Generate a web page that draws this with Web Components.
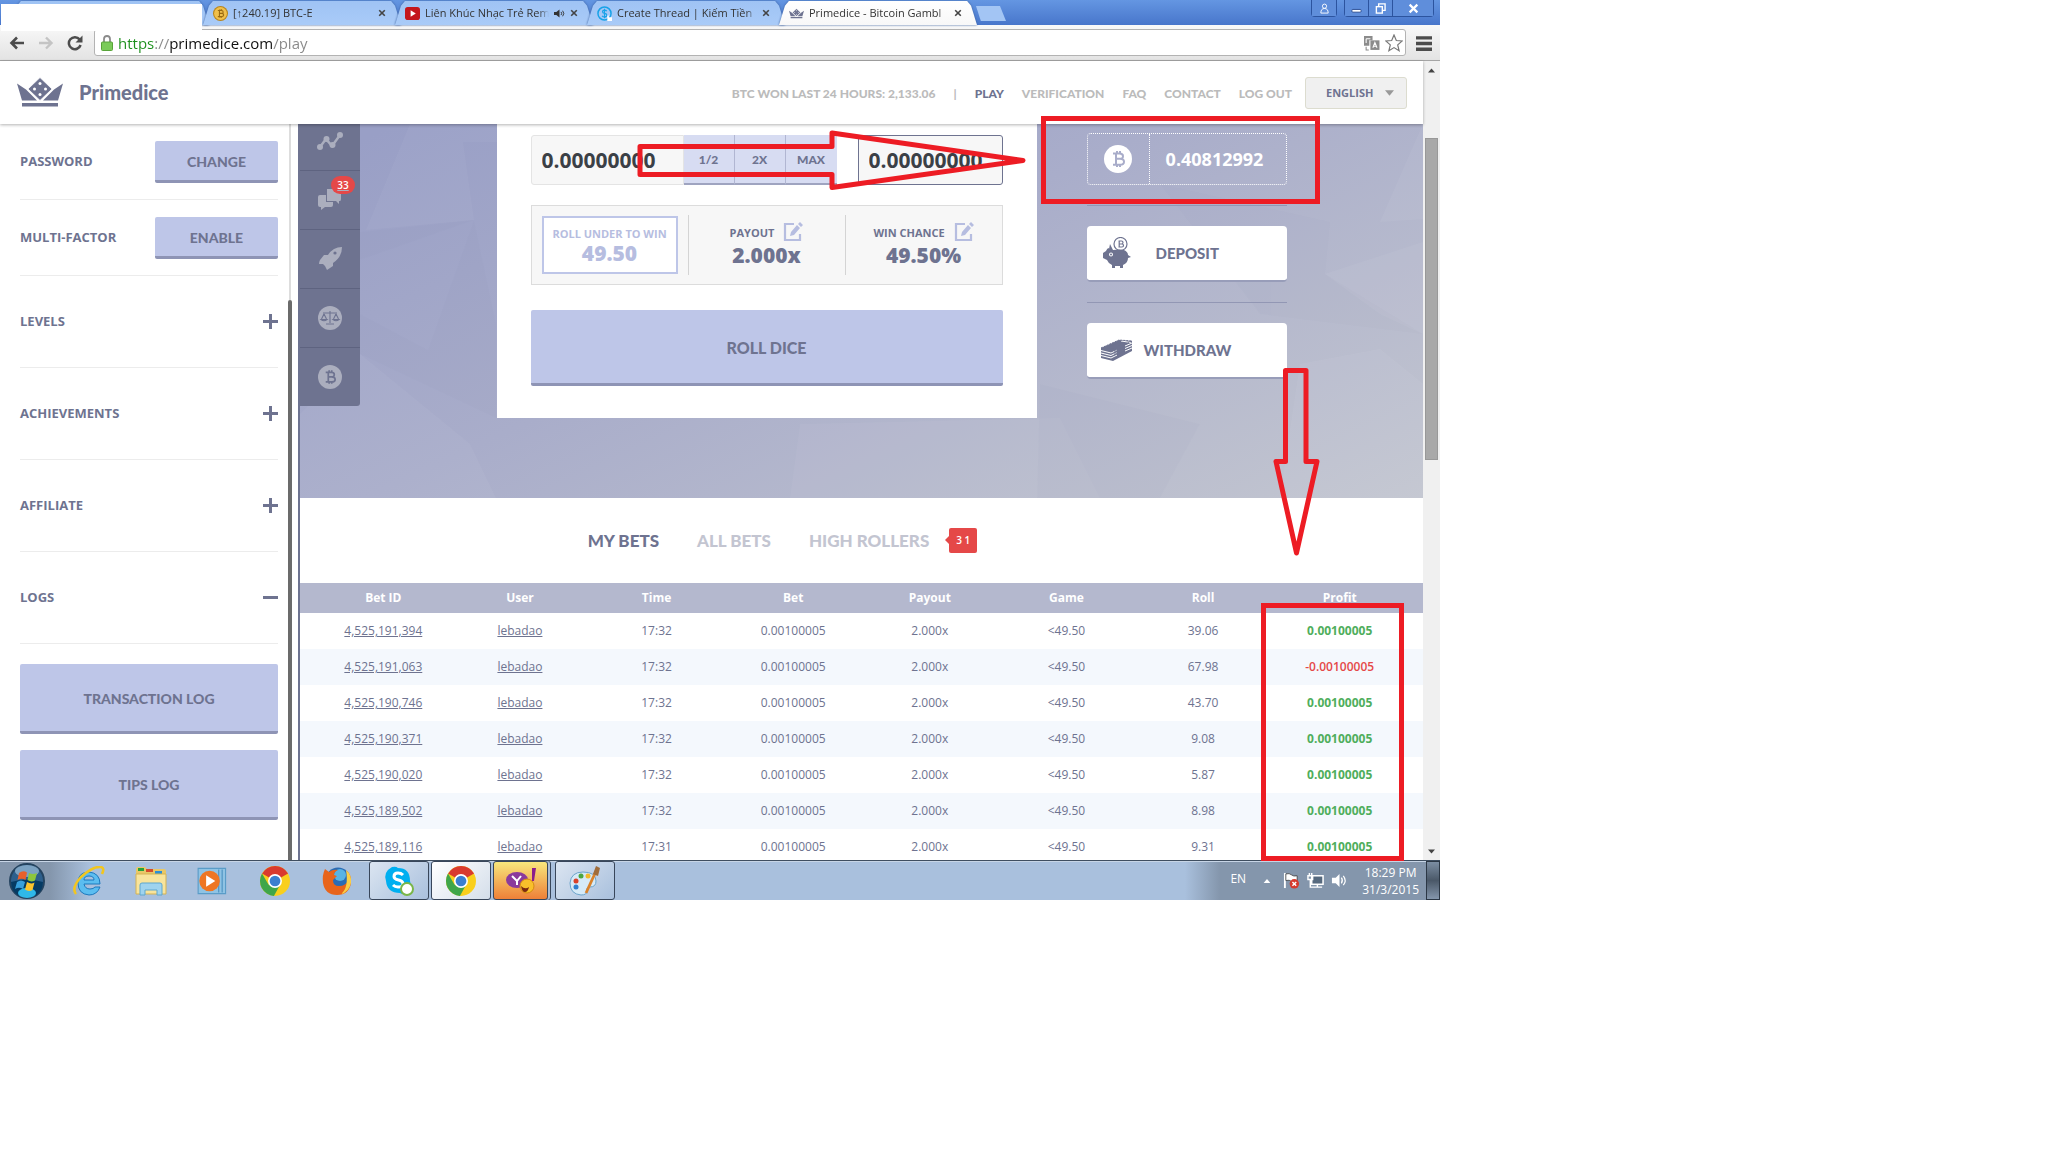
<!DOCTYPE html>
<html lang="en">
<head>
<meta charset="utf-8">
<title>Primedice - Bitcoin Gambling</title>
<style>
    body {
        margin: 0;
        display: grid;
        grid-template-columns: 45fr 19fr;
        background: #fff;
        font-family: "Open Sans", "Noto Sans", sans-serif;
        --ink: #6e7390;
        --soft: #bec6e8;
        --edge: #8e94b5;
        --display: Lato, "Open Sans", sans-serif;
    }
</style>
</head>
<body>

<win-desktop>
    <chrome-tabs>
        <chrome-tab></chrome-tab>
        <chrome-tab icon="coin">[↑240.19] BTC-E</chrome-tab>
        <chrome-tab icon="youtube" sound>Liên Khúc Nhạc Trẻ Rem</chrome-tab>
        <chrome-tab icon="thread">Create Thread | Kiếm Tiền</chrome-tab>
        <chrome-tab icon="crown" active>Primedice - Bitcoin Gambl</chrome-tab>
    </chrome-tabs>
    <chrome-toolbar></chrome-toolbar>
    <page-view>
        <site-header slot="header"></site-header>
        <side-panel slot="side">
            <side-row title="PASSWORD" kind="button" action="CHANGE"></side-row>
            <side-row title="MULTI-FACTOR" kind="button" action="ENABLE"></side-row>
            <side-row title="LEVELS" kind="plus"></side-row>
            <side-row title="ACHIEVEMENTS" kind="plus"></side-row>
            <side-row title="AFFILIATE" kind="plus"></side-row>
            <side-row title="LOGS" kind="minus"></side-row>
            <pd-button slot="logs" class="tall">TRANSACTION LOG</pd-button>
            <pd-button slot="logs" class="tall">TIPS LOG</pd-button>
        </side-panel>
        <hero-area>
            <nav-rail slot="rail"></nav-rail>
            <bet-panel></bet-panel>
            <wallet-panel></wallet-panel>
        </hero-area>
        <bet-tabs></bet-tabs>
        <bets-table></bets-table>
    </page-view>
    <win-taskbar></win-taskbar>
    <paint-marks slot="marks"></paint-marks>
</win-desktop>

<script>
(function (customElements) {

    'use strict';

    // bitcoin sign, drawn with strokes round the middle of a 28x28 box
    const COIN_MARK = '<path d="M9 8.500h6.500q3.500 0 3.500 2.700t-3.500 2.600h-3.500 4q4 0 4 3t-4 3h-7M12 8.500v11M13 6v2.500M16 6v2.500M13 19.500v2.500M16 19.500v2.500" fill="none" stroke="var(--mark, #6e7390)" stroke-width="2"/>';

    const CHROME = '<circle cx="14" cy="14" r="14" fill="#f9cf1c"/><path d="M14 14 2 7A14 14 0 0 1 26.200 7z" fill="#d93a2e"/><path d="M14 14 8 17.500 1.900 7A14 14 0 0 0 13 28l6-11z" fill="#3fa64a"/><circle cx="14" cy="14" r="6.500" fill="#fff"/><circle cx="14" cy="14" r="5" fill="#3b7fd0"/>';

    const CROWN = '<path d="M0 6 9 12 20 23H5zM46 6 37 12 26 23h15zM5 25.500h36V29H5z"/><path d="M23 0 35 11.500 23 23 11 11.500z" stroke="#fff" stroke-width=".8"/><g fill="#fff"><circle cx="23" cy="6" r="1.500"/><circle cx="17.500" cy="11.500" r="1.500"/><circle cx="28.500" cy="11.500" r="1.500"/><circle cx="23" cy="17" r="1.500"/></g>';

    // name: [viewBox, markup]
    const ICONS = {
        crown: ['0 0 46 29', CROWN],
        coin: ['0 0 28 28', '<circle cx="14" cy="14" r="14" fill="#b98519"/><circle cx="14" cy="14" r="12" fill="#f0c04c"/><g style="--mark:#9a6a10">' + COIN_MARK + '</g>'],
        youtube: ['0 0 16 16', '<rect y="1" width="16" height="14" rx="3" fill="#c4161c"/><path d="M6 4.500 11.500 8 6 11.500z" fill="#fff"/>'],
        thread: ['0 0 16 16', '<circle cx="8" cy="8" r="7" fill="none" stroke="#18a3e8" stroke-width="1.600"/><path d="M10.500 5.500q-1-1.200-2.600-1.200-2 0-2 1.700 0 1.500 2.200 1.900 2.400.4 2.400 2 0 1.800-2.400 1.800-1.700 0-2.700-1.200M8 3v10" fill="none" stroke="#18a3e8" stroke-width="1.300"/><path d="M11 10h1.500v2H16v4h-5z" fill="#fff"/>'],
        sound: ['0 0 14 12', '<path d="M0 4h3l4-3v10L3 8H0z"/><path d="M9 4q1.500 2 0 4M11 2.500q3 3.500 0 7" fill="none" stroke="currentColor" stroke-width="1.200"/>'],
        back: ['0 0 16 14', '<path d="M15 7H3M8 1.500 2.500 7 8 12.500" fill="none" stroke="currentColor" stroke-width="2.600"/>'],
        forward: ['0 0 16 14', '<path d="M1 7h12M8 1.500 13.500 7 8 12.500" fill="none" stroke="currentColor" stroke-width="2.400"/>'],
        reload: ['0 0 16 16', '<path d="M12.600 4.400A6 6 0 1 0 13.600 10" fill="none" stroke="currentColor" stroke-width="2.500"/><path d="M15.500.500v7h-7z"/>'],
        lock: ['0 0 12 16', '<path d="M3 8V4q0-3 3-3t3 3v4" fill="none" stroke="#8b8b8b" stroke-width="1.800"/><rect x=".5" y="7" width="11" height="8.500" rx="1" fill="#7bcb5a" stroke="#58a43a"/>'],
        translate: ['0 0 15 15', '<path d="M0 1h8v4H5v5H0z"/><path d="M6 5h8.500v9H6z"/><path d="M8.300 12 10.200 7l2 5M9 10.500h2.600M2 3.500h4M2 3.500v4" stroke="#fff" fill="none"/><path d="M2 11v3h2.500"  fill="none" stroke="currentColor"/>'],
        star: ['0 0 18 18', '<path d="m9 1 2.300 5.500 5.900.5-4.500 3.900 1.400 5.800L9 13.600l-5.100 3.100 1.400-5.800L.8 7l5.900-.5z" fill="#fff" stroke="#777" stroke-width="1.200"/>'],
        menu: ['0 0 14 14', '<path d="M0 1h14v3H0zM0 6h14v3H0zM0 11h14v3H0z"/>'],
        person: ['0 0 12 12', '<circle cx="6" cy="3.500" r="2.300" fill="none" stroke="currentColor"/><path d="M2 11q0-5 4-5t4 5z" fill="none" stroke="currentColor"/>'],
        minimize: ['0 0 12 12', '<rect x="1" y="7" width="10" height="3" rx="1" fill="#fff" stroke="#23468e"/>'],
        restore: ['0 0 12 12', '<path d="M4 3.500V1h7v7H8.500" fill="none" stroke="currentColor" stroke-width="1.500"/><rect x="1.500" y="4" width="6.500" height="7" fill="none" stroke="currentColor" stroke-width="1.500"/>'],
        close: ['0 0 10 10', '<path d="m1.500 1.500 7 7m0-7-7 7" fill="none" stroke="currentColor" stroke-width="2"/>'],
        plus: ['0 0 15 15', '<path d="M6 0h3v6h6v3H9v6H6V9H0V6h6z"/>'],
        minus: ['0 0 15 15', '<path d="M0 6h15v3H0z"/>'],
        caret: ['0 0 10 6', '<path d="M0 0h10L5 6z"/>'],
        graph: ['0 0 26 20', '<path d="M3 15 9 7l6 7 8-11" fill="none" stroke="currentColor" stroke-width="2.400"/><circle cx="3" cy="15" r="3"/><circle cx="9.500" cy="7" r="3"/><circle cx="15.500" cy="13" r="3"/><circle cx="23" cy="3" r="3"/>'],
        chat: ['0 0 24 22', '<path d="M9 0h12q2 0 2 2v8q0 2-1 2h-1v3l-3-3H9z"/><path d="M2 6h6v7h7v3q0 2-2 2H7l-4 3v-3H2q-2 0-2-2V8q0-2 2-2z"/>'],
        rocket: ['0 0 24 24', '<path d="M24 0q0 10-9 16v3l-6 4-2-4-2-2-4 0q0-2 1-4l4-5h4Q15 0 24 0z"/><circle cx="17" cy="6" r="1.600" fill="#6e7390"/>'],
        scales: ['0 0 24 24', '<circle cx="12" cy="12" r="12"/><path d="M12 5v12M8 18h8M5 7h14M6 8l-2.500 5M6 8l2.500 5M18 8l-2.500 5M18 8l2.500 5M3 13.500q3 2.500 6 0zM15 13.500q3 2.500 6 0z" fill="none" stroke="#6e7390" stroke-width="1.100"/>'],
        bitcoin: ['0 0 28 28', '<circle cx="14" cy="14" r="14"/>' + COIN_MARK],
        edit: ['0 0 20 20', '<path d="M11 2H2v16h15v-6" fill="none" stroke="currentColor" stroke-width="2.200"/><path d="M7 14l1-4 6-7 3 3-6 7zM15 2l2-2 3 3-2 2z"/>'],
        pig: ['0 0 29 32', '<circle cx="18.500" cy="7" r="6.500" fill="#fff" stroke="currentColor" stroke-width="1.200"/><path d="M16.500 4h3q1.500 0 1.500 1.500T19.500 7H17h3q1.500 0 1.500 1.500T20 10h-3.500M17.200 4v6" fill="none" stroke="currentColor" stroke-width="1.200"/><path d="M7 12 8 7l3 6q8-1 11 0 4 2 4 5l3 2-3 1q0 5-5 7v3h-3v-2h-5v2h-3v-3q-4-2-5-5l-4-2v-5l3-2q1-3 3-3z"/><circle cx="9" cy="17.500" r="2" fill="#fff"/><circle cx="9" cy="17.500" r="1"/>'],
        cash: ['0 0 31 24', '<path d="M0 10 18 2 31 3v10L12 23 0 20z"/><path d="M0 12.500l10 2.500 6-3M0 15l10 2.500 6-3M0 17.500 10 20l6-3M24 8l7-3M24 10.500l7-3M24 13l7-3M20 3l10 1.500" fill="none" stroke="#fff"/><path d="M6 10l10-4.500 4 .5-3 2v8l-4 2v-7z" opacity=".5"/><path d="M0 10 18 2 31 3 12 13z" fill="none" stroke="currentColor" stroke-dasharray="2 1"/>'],
        start: ['0 0 36 36', '<circle cx="18" cy="18" r="17" fill="#2d5f8c" stroke="#24435f" stroke-width="2"/><path d="M2 19q16-5 32 0-1 15-16 15T2 19z" fill="#063b63"/><ellipse cx="18" cy="30" rx="9" ry="5" fill="#2fb8e8"/><ellipse cx="18" cy="8" rx="12" ry="6" fill="#8fb3cf" opacity=".8"/><path d="M10 10q4-3 8-.5l-1.500 7.500q-4-2.500-8 0z" fill="#e9602b"/><path d="M20 10q4 2 8 0l-2 7.500q-4 2-7.500-.5z" fill="#8cc63e"/><path d="M8 19q4-3 8 0l-2 7q-4-2.500-8 0z" fill="#38a0dc"/><path d="M18 19q4 2.500 7.500.5l-2 7.500q-4 2-7.500-.5z" fill="#fbc42c"/>'],
        ie: ['0 0 32 30', '<path d="M27 18H11q1 5 6 5 3.500 0 5-2h5q-3 8-11 8Q5 28 5 17T16 6q11 1 11 12zM11 14h10q0-4-5-4t-5 4z" fill="#5bbdf0" stroke="#1c78bd"/><path d="M3 28Q-2 22 8 11 20 0 28 1q4 1 1 7" fill="none" stroke="#f2c61f" stroke-width="2.600"/>'],
        folder: ['0 0 32 30', '<path d="M1 4q0-3 2-3h7l2 2h17q2 0 2 2v22H1z" fill="#e9c867"/><path d="M3 2h6v3H3z" fill="#27a33a"/><path d="M11 3h7v3h-7z" fill="#d64b2c"/><path d="M20 5h7v3h-7z" fill="#2b8fd6"/><path d="M1 8h30v20H1z" fill="#f8e49c" stroke="#d4b355"/><path d="M5 29V19q0-2 2-2h18q2 0 2 2v10h-5v-5H10v5z" fill="#9fd3ee" stroke="#5ea7cf"/>'],
        player: ['0 0 28 26', '<path d="M1 2h24v22H1z" fill="#8fc3e4" stroke="#5a9cc8"/><path d="M19 3v20M22 3v20" stroke="#4d92c2"/><circle cx="11" cy="13" r="9" fill="#ee7623"/><path d="M8 8l8 5-8 5z" fill="#fff"/>'],
        chrome: ['0 0 28 28', CHROME],
        firefox: ['0 0 30 30', '<circle cx="16" cy="14" r="12.500" fill="#2a6cb5"/><circle cx="18" cy="9" r="6" fill="#58b3e4"/><path d="M3 3l4 3q4-3 9-2-4 2-4 5l3 1-4 4q0 6 6 6 7 0 9-6 1-6-2-10 6 5 5 13-2 12-14 12T1 17Q0 9 3 3z" fill="#e8641b"/><path d="M24 4q6 5 5 13-2 9-10 11 8-6 5-24z" fill="#f9cf45"/>'],
        skype: ['0 0 30 30', '<path d="M8 1q4-1 6 1 12 0 12 13 3 8-3 12-4 2-7 0Q3 27 2 15-1 6 8 1z" fill="#00aff0"/><path d="M19 9q-2-2-5-2-4 0-4 3.500 0 2.500 4.500 3.500t4.500 4q0 3-5 3-3 0-5-2" fill="none" stroke="#fff" stroke-width="3"/><circle cx="23" cy="23" r="6" fill="#fff" stroke="#7ab648" stroke-width="2"/>'],
        yahoo: ['0 0 32 28', '<ellipse cx="12" cy="13" rx="11" ry="8" fill="#8b3a9c"/><path d="M7 9l5 5 4-5M12 13v5" fill="none" stroke="#fff" stroke-width="2"/><path d="M27 1h4l-2 13h-2z" fill="#8b1d8c"/><circle cx="22" cy="19" r="7" fill="#f9c02b" stroke="#d58a12"/><path d="M16 19q4 4 8 1-1 5-4 5t-4-6z" fill="#7c2a10"/>'],
        paint: ['0 0 32 30', '<path d="M14 6q13 0 13 9 0 6-6 6-4 0-3 4 0 4-6 4Q1 28 1 17 2 6 14 6z" fill="#d6eaf7" stroke="#6ba4cb"/><circle cx="7" cy="15" r="2.500" fill="#d9412b"/><circle cx="12" cy="10" r="2.500" fill="#4ca641"/><circle cx="19" cy="10" r="2.500" fill="#f2b92b"/><circle cx="7" cy="21" r="2.500" fill="#2f7fd0"/><path d="M28 3 17 27" stroke="#d9822b" stroke-width="2.800"/><path d="M27 0l4 2-2 8-5-2z" fill="#a06c3a"/>'],
        flag: ['0 0 18 18', '<path d="M2 1v16" stroke="#fff" stroke-width="2"/><path d="M3 2q4-1 6 1t6 1v7q-4 1-6-1t-6-1z" fill="#fff" stroke="#333" stroke-width=".8"/><circle cx="12" cy="12.500" r="5" fill="#d63a2e"/><path d="M10 10.500l4 4m0-4-4 4" stroke="#fff" stroke-width="1.500"/>'],
        network: ['0 0 18 18', '<rect x="5" y="4" width="12" height="9" fill="#56697e" stroke="#fff" stroke-width="1.600"/><path d="M7 16h9M11 13v3M2.500 1v3M5 1v3M1 4h5v4H1zM3.500 8v8H7" fill="none" stroke="#fff" stroke-width="1.500"/>'],
        volume: ['0 0 18 18', '<path d="M1 6h4l4-4v14l-4-4H1z" fill="#fff"/><path d="M11 6q2 3 0 6M13 4q4 5 0 10" fill="none" stroke="#fff" stroke-width="1.300"/>']
    };

    // Registers an element whose shadow root is cloned from a template
    function define(name, html, setup) {
        const template = document.createElement('template');
        template.innerHTML = html;

        customElements.define(name, class extends HTMLElement {
            constructor() {
                super();
                this.attachShadow({mode: 'open'}).appendChild(template.content.cloneNode(true));
            }

            connectedCallback() {
                if (setup) setup(this, this.shadowRoot);
            }
        });
    }

    class UiIcon extends HTMLElement {
        constructor() {
            super();
            this.attachShadow({mode: 'open'});
        }

        connectedCallback() {
            const [box, markup] = ICONS[this.getAttribute('name')];
            this.shadowRoot.innerHTML = `
                <style>
                    :host { display: inline-block; flex: none; width: 16px; height: 16px; }
                    svg { display: block; width: 100%; height: 100%; fill: currentColor; }
                </style>
                <svg viewBox="${box}" aria-hidden="true">${markup}</svg>`;
        }
    }
    customElements.define('ui-icon', UiIcon);

    define('win-desktop', `
        <style>
            :host {
                display: flex;
                flex-direction: column;
                position: relative;
                aspect-ratio: 16 / 10;
                overflow: hidden;
            }
        </style>
        <slot></slot>
        <slot name="marks"></slot>
    `);

    /* ---------- browser ---------- */

    define('chrome-tabs', `
        <style>
            :host {
                display: flex;
                align-items: flex-end;
                height: 25px;
                padding: 0 6px 0 11px;
                background: linear-gradient(#6496e2, #4876cb);
                box-sizing: border-box;
                flex: none;
            }
            .new {
                width: 30px;
                height: 15px;
                margin: 0 0 4px 5px;
                padding: 0;
                border: 0;
                background: #a3c5f4;
                clip-path: polygon(0 0, 80% 0, 100% 100%, 16% 100%);
            }
            .window { display: flex; margin-left: auto; align-self: flex-start; gap: 7px; }
            .group { display: flex; border: 1px solid #2c549f; border-top: 0; border-radius: 0 0 4px 4px; }
            .group button {
                display: grid;
                place-items: center;
                height: 16px;
                width: 24px;
                padding: 0;
                border: 0;
                border-right: 1px solid #2c549f;
                background: #5f8edb;
                color: #fff;
            }
            .group button:last-child { border-right: 0; }
            .group .x { width: 40px; }
            ui-icon { width: 11px; height: 11px; }
        </style>
        <slot></slot>
        <button class="new" aria-label="New tab"></button>
        <div class="window">
            <div class="group"><button aria-label="User"><ui-icon name="person"></ui-icon></button></div>
            <div class="group">
                <button aria-label="Minimize"><ui-icon name="minimize"></ui-icon></button>
                <button aria-label="Restore"><ui-icon name="restore"></ui-icon></button>
                <button class="x" aria-label="Close"><ui-icon name="close"></ui-icon></button>
            </div>
        </div>
    `);

    define('chrome-tab', `
        <style>
            :host {
                display: block;
                flex: 0 1 198px;
                min-width: 0;
                height: 24px;
                margin-right: -6px;
                filter: drop-shadow(0 0 1px #3a5f9f);
                --tab: linear-gradient(#9fc3f4, #a9cbf8);
            }
            :host([active]) { --tab: linear-gradient(#fff, #f8f8f8); z-index: 1; }
            .tab {
                display: flex;
                align-items: center;
                gap: 5px;
                height: 100%;
                padding: 0 15px 0 10px;
                box-sizing: border-box;
                background: var(--tab);
                clip-path: polygon(0 100%, 3% 20%, 5% 0, 95% 0, 97% 20%, 100% 100%);
                color: #333;
                font-size: 11px;
                line-height: 16px;
            }
            .title {
                flex: 1;
                min-width: 0;
                overflow: hidden;
                white-space: nowrap;
                mask-image: linear-gradient(90deg, #000 92%, transparent);
            }
            ui-icon { width: 15px; height: 15px; }
            .sound { width: 11px; height: 11px; }
            button { padding: 0; border: 0; background: none; color: #444; line-height: 0; }
            button ui-icon { width: 8px; height: 8px; }
        </style>
        <div class="tab"><span class="title"><slot></slot></span><button aria-label="Close tab"><ui-icon name="close"></ui-icon></button></div>
    `, (host, root) => {
        const title = root.querySelector('.title');
        if (host.hasAttribute('icon')) {
            title.insertAdjacentHTML('beforebegin', `<ui-icon name="${host.getAttribute('icon')}" style="color: var(--ink)"></ui-icon>`);
        }
        if (host.hasAttribute('sound')) {
            title.insertAdjacentHTML('afterend', '<ui-icon class="sound" name="sound"></ui-icon>');
        }
    });

    define('chrome-toolbar', `
        <style>
            :host {
                display: flex;
                align-items: center;
                gap: 13px;
                flex: none;
                height: 36px;
                padding: 0 8px 0 9px;
                box-sizing: border-box;
                background: linear-gradient(#f9f9f9, #e3e3e3);
                border-bottom: 1px solid #a5a5a5;
                color: #4c4c4c;
            }
            button { padding: 0; border: 0; background: none; color: inherit; line-height: 0; }
            .off { color: #c4c4c4; }
            .bar {
                display: flex;
                align-items: center;
                flex: 1;
                gap: 5px;
                height: 27px;
                margin: 0 -3px 0 -2px;
                padding: 0 2px 0 6px;
                box-sizing: border-box;
                background: #fff;
                border: 1px solid #b3b3b3;
                border-radius: 3px;
                color: #8c8c8c;
            }
            input {
                flex: 1;
                min-width: 0;
                padding: 0;
                border: 0;
                outline: 0;
                font: 15px/20px "Open Sans", "Noto Sans", sans-serif;
                color: transparent;
                background: linear-gradient(90deg, #1b8f1b 36px, #888 36px 51px, #111 51px 155px, #888 155px);
                background-clip: text;
                -webkit-background-clip: text;
            }
            .lock { width: 12px; height: 16px; }
            .star { width: 18px; height: 18px; }
        </style>
        <button aria-label="Back"><ui-icon name="back"></ui-icon></button>
        <button class="off" aria-label="Forward"><ui-icon name="forward"></ui-icon></button>
        <button aria-label="Reload"><ui-icon name="reload"></ui-icon></button>
        <div class="bar">
            <ui-icon class="lock" name="lock"></ui-icon>
            <input type="text" aria-label="Address" value="https://primedice.com/play">
            <ui-icon name="translate"></ui-icon>
            <ui-icon class="star" name="star"></ui-icon>
        </div>
        <button aria-label="Menu"><ui-icon name="menu"></ui-icon></button>
    `);

    define('page-view', `
        <style>
            :host {
                display: grid;
                grid-template: auto minmax(0, 1fr) / 298px minmax(0, 1fr) 17px;
                flex: 1;
                min-height: 0;
                background: #fff;
            }
            .header { grid-column: 1 / 3; position: relative; z-index: 1; }
            main { border-left: 2px solid var(--ink); overflow: hidden; }
            .scroll {
                grid-column: 3;
                grid-row: 1 / 3;
                display: grid;
                grid-template-rows: 77px 322px 1fr auto;
                padding: 0 2px 6px;
                background: #f0f0f0;
                color: #444;
            }
            .scroll ui-icon { width: 7px; height: 5px; justify-self: center; }
            .up { transform: rotate(180deg); margin-top: 7px; }
            .thumb { background: #a8a8a8; border: 1px solid #989898; }
            .down { grid-row: 4; }
        </style>
        <div class="header"><slot name="header"></slot></div>
        <slot name="side"></slot>
        <main><slot></slot></main>
        <div class="scroll">
            <ui-icon class="up" name="caret"></ui-icon>
            <div class="thumb"></div>
            <ui-icon class="down" name="caret"></ui-icon>
        </div>
    `);

    /* ---------- site ---------- */

    define('pd-button', `
        <style>
            :host { display: block; height: 42px; font-size: 14px; }
            :host(.tall) { height: 70px; }
            :host(.roll) { height: 76px; font-size: 16px; }
            button {
                width: 100%;
                height: 100%;
                padding: 2px 0 0;
                border: 0;
                border-bottom: 3px solid var(--edge);
                border-radius: 2px;
                background: var(--soft);
                color: var(--ink);
                font-family: var(--display);
                font-size: inherit;
                font-weight: 900;
            }
        </style>
        <button><slot></slot></button>
    `);

    define('site-header', `
        <style>
            :host {
                display: flex;
                align-items: center;
                height: 63px;
                padding: 0 16px 0 17px;
                background: #fff;
                box-shadow: 0 1px 3px rgba(0, 0, 0, .3);
                color: var(--ink);
                font-family: var(--display);
            }
            .logo { display: flex; align-items: center; gap: 16px; padding-bottom: 2px; color: inherit; text-decoration: none; font-size: 20px; font-weight: 900; }
            .logo ui-icon { width: 46px; height: 30px; }
            nav { display: flex; align-items: center; gap: 18px; margin-left: auto; padding-top: 2px; font-size: 12px; font-weight: 900; color: #bbb; }
            nav a { color: inherit; text-decoration: none; }
            nav a.on { color: var(--ink); }
            .lang { display: grid; align-items: center; margin-left: 13px; width: 102px; }
            .lang > * { grid-area: 1 / 1; }
            select {
                appearance: none;
                height: 32px;
                padding: 0 20px;
                border: 1px solid #dcdccf;
                border-radius: 3px;
                background: #f0f0f0;
                color: var(--ink);
                font: bold 11px "Open Sans", sans-serif;
            }
            .lang ui-icon { width: 9px; height: 6px; justify-self: end; margin-right: 13px; pointer-events: none; color: #999; }
        </style>
        <a class="logo" href="#"><ui-icon name="crown"></ui-icon>Primedice</a>
        <nav>
            <span>BTC WON LAST 24 HOURS: 2,133.06</span>
            <span>|</span>
            <a class="on" href="#play">PLAY</a>
            <a href="#verification">VERIFICATION</a>
            <a href="#faq">FAQ</a>
            <a href="#contact">CONTACT</a>
            <a href="#logout">LOG OUT</a>
        </nav>
        <div class="lang">
            <select aria-label="Language"><option>ENGLISH</option></select>
            <ui-icon name="caret"></ui-icon>
        </div>
    `);

    define('side-panel', `
        <style>
            :host { display: grid; grid-template-columns: 1fr 4px; gap: 10px; padding: 0 6px 0 20px; overflow: hidden; }
            .logs { display: grid; gap: 16px; padding-top: 20px; }
            .track { display: grid; grid-template-rows: 176px 1fr; }
            .track::before { content: ""; margin: 0 1px; background: #ddd; }
            .track::after { content: ""; background: #6b6b6b; border-radius: 2px 2px 0 0; }
        </style>
        <div>
            <slot></slot>
            <div class="logs"><slot name="logs"></slot></div>
        </div>
        <div class="track"></div>
    `);

    define('side-row', `
        <style>
            :host {
                display: flex;
                align-items: center;
                justify-content: space-between;
                height: 92px;
                box-sizing: border-box;
                border-bottom: 1px solid #ececec;
                color: var(--ink);
                font-size: 13px;
                font-weight: bold;
            }
            :host([kind=button]) { height: 76px; }
            span { padding-bottom: 2px; }
            pd-button { width: 123px; }
            .toggle { padding: 0; border: 0; background: none; color: inherit; line-height: 0; }
            ui-icon { width: 15px; height: 15px; }
        </style>
        <span></span>
    `, (host, root) => {
        const kind = host.getAttribute('kind');
        const title = host.getAttribute('title');
        const label = root.querySelector('span');
        label.textContent = title;
        label.insertAdjacentHTML('afterend', kind === 'button'
            ? `<pd-button>${host.getAttribute('action')}</pd-button>`
            : `<button class="toggle" aria-label="${title}"><ui-icon name="${kind}"></ui-icon></button>`);
    });

    define('hero-area', `
        <style>
            :host {
                display: grid;
                height: 374px;
                background: linear-gradient(155deg, #999fc6 5%, #a9adca 45%, #c3c6d0);
            }
            :host > * { grid-area: 1 / 1; }
            .facets { width: 100%; height: 374px; }
            .content { display: grid; grid-template-columns: 60px 1fr; align-items: start; }
            .middle { display: flex; justify-content: center; align-items: flex-start; gap: 50px; }
        </style>
        <svg class="facets" viewBox="0 0 1123 374" preserveAspectRatio="none" aria-hidden="true">
            <g fill="#fff" opacity=".04">
                <path d="M110 0 66 106 174 96 163 18H197V0z"/>
                <path d="M60 230 170 320 196 374H0V290z"/>
                <path d="M1025 150 1123 118V210L1080 190z"/>
                <path d="M1123 0 1080 98 1123 95z"/>
                <path d="M1000 240 1080 225 1123 260V374H980z"/>
                <path d="M500 300 760 294 800 374H490z"/>
            </g>
            <g fill="#5c6290" opacity=".02">
                <path d="M60 108 174 96 60 136z"/>
                <path d="M60 190 128 226 174 96 196 200V294L60 230z"/>
                <path d="M860 60 1030 98 1025 150 1123 210 960 190z"/>
                <path d="M740 260 900 300 860 374H737z"/>
            </g>
        </svg>
        <div class="content">
            <slot name="rail"></slot>
            <div class="middle"><slot></slot></div>
        </div>
    `);

    define('nav-rail', `
        <style>
            :host { display: grid; background: var(--ink); border-radius: 0 0 3px 0; }
            a {
                display: grid;
                place-items: center;
                height: 58px;
                border-bottom: 1px solid #5e6380;
                color: #abaebe;
            }
            a:first-of-type { height: 46px; align-items: start; }
            a:first-of-type ui-icon { margin-top: 8px; height: 20px; width: 26px; }
            a:last-of-type { border: 0; }
            ui-icon { width: 24px; height: 24px; grid-area: 1 / 1; }
            .badge {
                grid-area: 1 / 1;
                align-self: start;
                margin: 5px 0 0 26px;
                padding: 0 6px;
                border-radius: 9px;
                background: #e54848;
                color: #fff;
                font-size: 10px;
                font-weight: 600;
                line-height: 18px;
                z-index: 1;
            }
        </style>
        <a href="#stats" aria-label="Statistics"><ui-icon name="graph"></ui-icon></a>
        <a href="#chat" aria-label="Chat"><ui-icon name="chat"></ui-icon><span class="badge">33</span></a>
        <a href="#boost" aria-label="Automated betting"><ui-icon name="rocket"></ui-icon></a>
        <a href="#fair" aria-label="Provably fair"><ui-icon name="scales"></ui-icon></a>
        <a href="#coins" aria-label="Bitcoin"><ui-icon name="bitcoin"></ui-icon></a>
    `);

    define('bet-panel', `
        <style>
            :host {
                display: grid;
                width: 540px;
                padding: 11px 34px 32px;
                box-sizing: border-box;
                background: #fff;
                color: var(--ink);
            }
            .amounts { display: flex; height: 50px; margin-bottom: 20px; }
            input {
                min-width: 0;
                box-sizing: border-box;
                padding: 0 10px;
                border: 1px solid #e4e4e4;
                border-radius: 3px 0 0 3px;
                background: #f7f7f7;
                color: #3b4046;
                font: bold 21px "Open Sans", sans-serif;
            }
            .bet { width: 153px; }
            .win { width: 145px; margin-left: auto; border-color: var(--ink); border-radius: 0 3px 3px 0; }
            .amounts button {
                width: 51px;
                padding: 0;
                border: 0;
                border-right: 1px solid #b1b6d2;
                border-bottom: 2px solid #9fa4c0;
                background: #d7dcf2;
                color: var(--ink);
                font: 900 12px var(--display);
            }
            .amounts button:nth-of-type(3) { border-right: 0; }
            .stats {
                display: grid;
                grid-template-columns: 157px 157px 1fr;
                height: 80px;
                margin-bottom: 25px;
                box-sizing: border-box;
                padding: 9px 0;
                border: 1px solid #dcdcdc;
                background: #f7f7f7;
                font-size: 11px;
                font-weight: bold;
                text-align: center;
            }
            .stat { display: grid; align-content: center; border-right: 1px solid #d4d4d4; }
            .stat:last-child { border: 0; }
            .stat b { font-size: 21px; line-height: 26px; }
            .caption { display: flex; align-items: center; justify-content: center; gap: 9px; line-height: 15px; }
            .under { margin: 1px 10px; border: 2px solid var(--soft); background: #fff; color: #b6bde0; display: grid; align-content: center; }
            .first { display: grid; border-right: 1px solid #d4d4d4; }
            .under b { font-size: 21px; line-height: 24px; }
            .caption button { padding: 0; border: 0; background: none; line-height: 0; color: #b6bde0; }
            .caption ui-icon { width: 20px; height: 20px; }
        </style>
        <div class="amounts">
            <input class="bet" type="text" aria-label="Bet size" value="0.00000000">
            <button>1/2</button><button>2X</button><button>MAX</button>
            <input class="win" type="text" aria-label="Profit on win" value="0.00000000">
        </div>
        <div class="stats">
            <div class="first"><div class="under"><span class="caption">ROLL UNDER TO WIN</span><b>49.50</b></div></div>
            <div class="stat">
                <span class="caption">PAYOUT <button aria-label="Edit payout"><ui-icon name="edit"></ui-icon></button></span>
                <b>2.000x</b>
            </div>
            <div class="stat">
                <span class="caption">WIN CHANCE <button aria-label="Edit win chance"><ui-icon name="edit"></ui-icon></button></span>
                <b>49.50%</b>
            </div>
        </div>
        <pd-button class="roll">ROLL DICE</pd-button>
    `);

    define('wallet-panel', `
        <style>
            :host { display: grid; width: 200px; padding-top: 9px; }
            .balance {
                display: grid;
                grid-template-columns: 61px 1fr;
                align-items: center;
                height: 52px;
                box-sizing: border-box;
                border: 1px dotted #fff;
                border-radius: 4px;
                color: #fff;
                font-size: 18px;
                font-weight: bold;
            }
            .balance span { line-height: 50px; padding-right: 6px; border-left: 1px dotted #fff; text-align: center; }
            .balance ui-icon { width: 28px; height: 28px; justify-self: center; --mark: #a9adca; }
            hr { width: 100%; margin: 20px 0; border: 0; height: 1px; background: #9297b4; }
            .action {
                display: flex;
                align-items: center;
                height: 56px;
                padding: 0 14px;
                gap: 12px;
                border: 0;
                border-bottom: 2px solid #989db9;
                border-radius: 4px;
                background: #fff;
                color: var(--ink);
                font: 900 15px var(--display);
            }
            .action ui-icon { width: 31px; height: 32px; }
            .wide { gap: 24px; }
        </style>
        <div class="balance"><ui-icon name="bitcoin"></ui-icon><span>0.40812992</span></div>
        <hr>
        <button class="action wide"><ui-icon name="pig"></ui-icon>DEPOSIT</button>
        <hr>
        <button class="action"><ui-icon name="cash"></ui-icon>WITHDRAW</button>
    `);

    define('bet-tabs', `
        <style>
            :host {
                display: flex;
                align-items: center;
                justify-content: center;
                gap: 38px;
                height: 85px;
                padding-right: 158px;
                box-sizing: border-box;
                font-family: var(--display);
                font-size: 17px;
                font-weight: 900;
            }
            a { display: flex; align-items: center; color: #c3c5d1; text-decoration: none; }
            a.on { color: var(--ink); }
            .count {
                margin-left: 20px;
                padding: 0 7px;
                background: #e54848;
                border-radius: 2px;
                color: #fff;
                font: 600 10px/25px "Open Sans", sans-serif;
            }
            .count::before {
                content: "";
                float: left;
                margin: 8px 0 0 -11px;
                border: 4px solid transparent;
                border-left: 0;
                border-right-color: #e54848;
            }
        </style>
        <a class="on" href="#my">MY BETS</a>
        <a href="#all">ALL BETS</a>
        <a href="#high">HIGH ROLLERS <span class="count">3 1</span></a>
    `);

    const BETS = [
        ['4,525,191,394', '17:32', '39.06', '0.00100005'],
        ['4,525,191,063', '17:32', '67.98', '-0.00100005'],
        ['4,525,190,746', '17:32', '43.70', '0.00100005'],
        ['4,525,190,371', '17:32', '9.08', '0.00100005'],
        ['4,525,190,020', '17:32', '5.87', '0.00100005'],
        ['4,525,189,502', '17:32', '8.98', '0.00100005'],
        ['4,525,189,116', '17:31', '9.31', '0.00100005']
    ];

    define('bets-table', `
        <style>
            :host { display: block; color: var(--ink); font-size: 12px; }
            table, thead, tbody { display: block; }
            tr { display: flex; padding: 0 15px; line-height: 36px; }
            th, td { flex: 1; padding: 0; text-align: center; }
            thead tr { background: #b4b8ce; color: #fff; line-height: 30px; }
            tbody tr:nth-child(even) { background: #f4f8fd; }
            a { color: inherit; }
            .up { color: #4fae5c; font-weight: bold; }
            .down { color: #e54848; font-weight: 600; }
        </style>
        <table>
            <thead><tr><th>Bet ID</th><th>User</th><th>Time</th><th>Bet</th><th>Payout</th><th>Game</th><th>Roll</th><th>Profit</th></tr></thead>
            <tbody></tbody>
        </table>
    `, (host, root) => {
        root.querySelector('tbody').innerHTML = BETS.map(([id, time, roll, profit]) => `
            <tr>
                <td><a href="#bet">${id}</a></td>
                <td><a href="#user">lebadao</a></td>
                <td>${time}</td>
                <td>0.00100005</td>
                <td>2.000x</td>
                <td>&lt;49.50</td>
                <td>${roll}</td>
                <td class="${profit[0] === '-' ? 'down' : 'up'}">${profit}</td>
            </tr>`).join('');
    });

    /* ---------- taskbar ---------- */

    define('win-taskbar', `
        <style>
            :host {
                display: flex;
                flex: none;
                height: 40px;
                box-sizing: border-box;
                border-top: 1px solid #3f4e60;
                box-shadow: inset 0 1px #c7d5e6;
                background: linear-gradient(90deg, #8496ac 50px, #a9c0dd 90px, #a9c0dd calc(100% - 255px), #8496ac calc(100% - 220px));
                color: #fff;
                font-size: 12px;
            }
            button { display: grid; place-items: center; width: 62px; padding: 0; border: 0; background: none; }
            button.start { width: 54px; margin-right: 4px; }
            button.open {
                width: 60px;
                margin: 0 1px;
                border: 1px solid #38465a;
                border-radius: 3px;
                background: linear-gradient(135deg, #dbe5f1, #a9c0dd);
            }
            button.front { background: linear-gradient(135deg, #fff, #d4deea); }
            button.alert { width: 55px; background: linear-gradient(#f8e77c, #ee8038); margin-right: 6px; box-shadow: 2px 0 #a9bdd6, 3px 0 #38465a; }
            ui-icon { width: 32px; height: 30px; }
            .start ui-icon { width: 36px; height: 36px; }
            .tray { display: flex; align-items: center; gap: 7px; margin-left: auto; }
            .tray ui-icon { width: 17px; height: 17px; }
            .tray .more { width: 8px; height: 4px; transform: rotate(180deg); margin: 0 5px 0 10px; }
            .lang { padding-bottom: 5px; }
            time { margin: 0 0 0 7px; line-height: 17px; text-align: center; }
            .peek { width: 14px; align-self: stretch; box-sizing: border-box; border: 1px solid #2b3745; background: linear-gradient(#7b8da2, #4a5868 50%, #8496ac); }
        </style>
        <button class="start" aria-label="Start"><ui-icon name="start"></ui-icon></button>
        <button aria-label="Internet Explorer"><ui-icon name="ie"></ui-icon></button>
        <button aria-label="Explorer"><ui-icon name="folder"></ui-icon></button>
        <button aria-label="Media Player"><ui-icon name="player"></ui-icon></button>
        <button aria-label="Chrome"><ui-icon name="chrome"></ui-icon></button>
        <button aria-label="Firefox"><ui-icon name="firefox"></ui-icon></button>
        <button class="open" aria-label="Skype"><ui-icon name="skype"></ui-icon></button>
        <button class="open front" aria-label="Chrome window"><ui-icon name="chrome"></ui-icon></button>
        <button class="open alert" aria-label="Messenger"><ui-icon name="yahoo"></ui-icon></button>
        <button class="open" aria-label="Paint"><ui-icon name="paint"></ui-icon></button>
        <div class="tray">
            <span class="lang">EN</span>
            <ui-icon class="more" name="caret"></ui-icon>
            <ui-icon name="flag"></ui-icon>
            <ui-icon name="network"></ui-icon>
            <ui-icon name="volume"></ui-icon>
            <time>18:29 PM<br>31/3/2015</time>
            <div class="peek"></div>
        </div>
    `);

    // Hand-drawn marks that lie over the whole desktop
    define('paint-marks', `
        <style>
            :host { position: absolute; inset: 0; z-index: 5; pointer-events: none; }
            svg { display: block; width: 100%; height: 100%; }
        </style>
        <svg viewBox="0 0 1440 900" aria-hidden="true">
            <path d="M1 4h201v27H1z" fill="#fff"/>
            <g fill="none" stroke="#ed1c24" stroke-width="5" stroke-linejoin="round">
                <path d="M640 146.500H832V133L1023 160.500 832 187.500V174.500H640z"/>
                <path d="M1285.500 370.500H1306V461.500H1317L1296.500 553 1276 461.500H1285.500z"/>
                <g stroke-linejoin="miter">
                    <path d="M1043.500 118.500H1317.500V201.500H1043.500z"/>
                    <path d="M1263.500 605.500H1401.500V858.500H1263.500z"/>
                </g>
            </g>
        </svg>
    `);

})(window.customElements);
</script>
</body>
</html>
